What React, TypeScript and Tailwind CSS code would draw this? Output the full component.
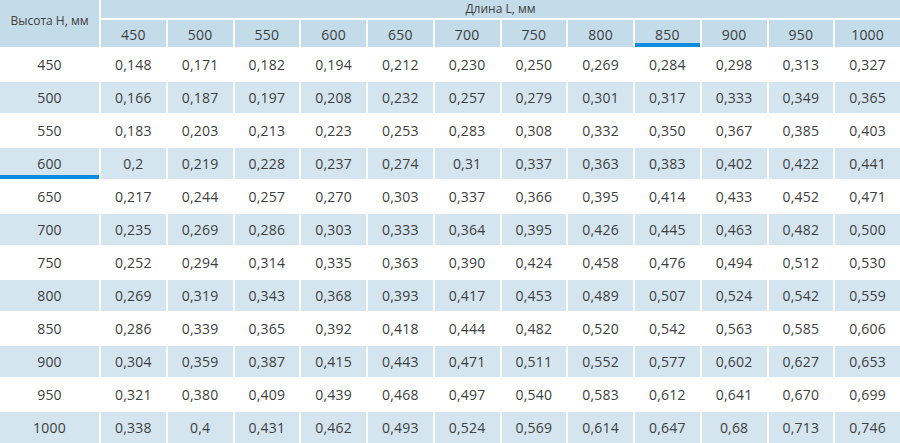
const lengths = [450, 500, 550, 600, 650, 700, 750, 800, 850, 900, 950, 1000]

const rows: { h: number; values: string[] }[] = [
  { h: 450, values: ["0,148", "0,171", "0,182", "0,194", "0,212", "0,230", "0,250", "0,269", "0,284", "0,298", "0,313", "0,327"] },
  { h: 500, values: ["0,166", "0,187", "0,197", "0,208", "0,232", "0,257", "0,279", "0,301", "0,317", "0,333", "0,349", "0,365"] },
  { h: 550, values: ["0,183", "0,203", "0,213", "0,223", "0,253", "0,283", "0,308", "0,332", "0,350", "0,367", "0,385", "0,403"] },
  { h: 600, values: ["0,2", "0,219", "0,228", "0,237", "0,274", "0,31", "0,337", "0,363", "0,383", "0,402", "0,422", "0,441"] },
  { h: 650, values: ["0,217", "0,244", "0,257", "0,270", "0,303", "0,337", "0,366", "0,395", "0,414", "0,433", "0,452", "0,471"] },
  { h: 700, values: ["0,235", "0,269", "0,286", "0,303", "0,333", "0,364", "0,395", "0,426", "0,445", "0,463", "0,482", "0,500"] },
  { h: 750, values: ["0,252", "0,294", "0,314", "0,335", "0,363", "0,390", "0,424", "0,458", "0,476", "0,494", "0,512", "0,530"] },
  { h: 800, values: ["0,269", "0,319", "0,343", "0,368", "0,393", "0,417", "0,453", "0,489", "0,507", "0,524", "0,542", "0,559"] },
  { h: 850, values: ["0,286", "0,339", "0,365", "0,392", "0,418", "0,444", "0,482", "0,520", "0,542", "0,563", "0,585", "0,606"] },
  { h: 900, values: ["0,304", "0,359", "0,387", "0,415", "0,443", "0,471", "0,511", "0,552", "0,577", "0,602", "0,627", "0,653"] },
  { h: 950, values: ["0,321", "0,380", "0,409", "0,439", "0,468", "0,497", "0,540", "0,583", "0,612", "0,641", "0,670", "0,699"] },
  { h: 1000, values: ["0,338", "0,4", "0,431", "0,462", "0,493", "0,524", "0,569", "0,614", "0,647", "0,68", "0,713", "0,746"] },
]

export default function App() {
  return (
    <div
      className="w-[900px] h-[443px] bg-white text-[#404040] overflow-hidden"
      style={{ fontFamily: '"Open Sans", "Liberation Sans", sans-serif' }}
    >
      <div className="grid grid-cols-[99px_repeat(12,1fr)] grid-rows-[18px_27px_repeat(12,31px)] gap-[2px]">
        {/* header */}
        <div className="row-span-2 bg-[#c4dbea] flex items-center justify-center text-[12px] pb-[5px]">
          Высота Н, мм
        </div>
        <div className="col-span-12 bg-[#c4dbea] flex items-center justify-center text-[12px]">Длина L, мм</div>
        {lengths.map((l) => (
          <div key={l} className="relative bg-[#c4dbea] flex items-center justify-center text-[14px] tracking-[0.2px] pt-[2px]">
            {l}
            {l === 850 && <div className="absolute left-0 right-0 bottom-0 h-[4px] bg-[#0b8ddd]" />}
          </div>
        ))}

        {/* body */}
        {rows.map((row, i) => {
          const bg = i % 2 === 1 ? "bg-[#d4e5f0]" : "bg-white"
          return [
            <div key={`h${row.h}`} className={`relative ${bg} flex items-center justify-center text-[14px] tracking-[0.2px]`}>
              {row.h}
              {row.h === 600 && <div className="absolute left-0 right-0 bottom-0 h-[4px] bg-[#0b8ddd]" />}
            </div>,
            ...row.values.map((v, j) => (
              <div key={`${row.h}-${j}`} className={`${bg} flex items-center justify-center text-[14px] tracking-[0.2px]`}>
                {v}
              </div>
            )),
          ]
        })}
      </div>
    </div>
  )
}
